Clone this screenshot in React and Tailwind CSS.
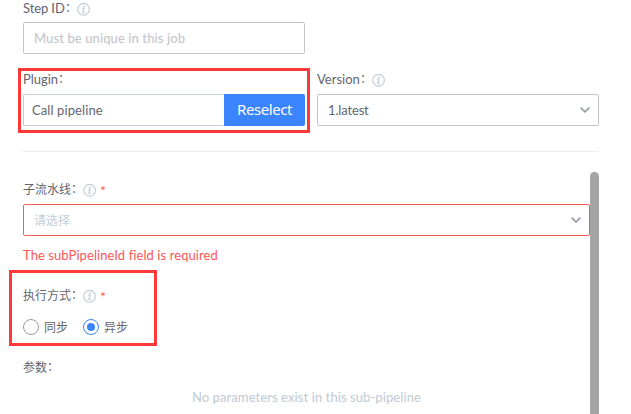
const latin = "font-['Lato','Noto_Sans_CJK_SC',sans-serif]";

function InfoIcon() {
  return (
    <svg className="relative top-px h-[13px] w-[13px] shrink-0" viewBox="0 0 13 13" fill="none" stroke="#c4cedb">
      <circle cx="6.6" cy="6.3" r="5.8" strokeWidth="1.2" />
      <path d="M5.2 5.2H7L6 9.4H7.8" strokeWidth="1.3" />
      <path d="M7.2 2.5L6.9 3.9" strokeWidth="1.6" />
    </svg>
  );
}

function Chevron() {
  return (
    <svg className="h-[6px] w-[10px] shrink-0" viewBox="0 0 10 6" fill="none" stroke="#979ba5" strokeWidth="1.6">
      <path d="M0.6 0.6L5 4.9L9.4 0.6" />
    </svg>
  );
}

function Label({ text, info, required, textClass = "relative top-px text-[12px]" }) {
  return (
    <div className="flex h-4 items-center leading-4 text-[#63656e]">
      <span className={`whitespace-nowrap ${textClass}`}>{text}</span>
      <span className="w-3 text-[12px]">：</span>
      {info && <InfoIcon />}
      {required && <span className="relative top-[2px] ml-1 text-[14px] leading-4 text-[#ff5656]">*</span>}
    </div>
  );
}

function Radio({ label, checked }) {
  return (
    <div className="flex w-[60px] items-center">
      <span
        className={`flex h-4 w-4 items-center justify-center rounded-full border ${checked ? "border-[#3a84ff]" : "border-[#979ba5]"}`}
      >
        {checked && <span className="h-2 w-2 rounded-full bg-[#3a84ff]" />}
      </span>
      <span className="relative top-px ml-[5px] text-[12px] leading-4">{label}</span>
    </div>
  );
}

export default function App() {
  return (
    <div className={`relative h-[414px] w-[631px] overflow-hidden bg-white pl-[23px] text-[#63656e] [font-variant-ligatures:none] ${latin}`}>
      <Label text="Step ID" info textClass="w-[42px] text-[13px] tracking-[-0.1px]" />
      <div className="mt-[6px] flex h-8 w-[282px] items-center rounded-[2px] border border-[#c4c6cc] pt-px pl-[10px] text-[13px] font-medium text-[#c4c6cc]">
        <span className="tracking-[0.1px]">Must be unique in this job</span>
      </div>

      <div className="mt-[17px] flex gap-3">
        <div className="w-[282px]">
          <Label text="Plugin" textClass="w-[35px] text-[13px] tracking-[-0.05px]" />
          <div className="mt-[7px] flex h-8">
            <div className="flex flex-1 items-center rounded-l-[2px] border border-r-0 border-[#c3cdd7] pt-[2px] pl-2 text-[13px] tracking-[0.1px]">
              <span>Call pipeline</span>
            </div>
            <div className="flex w-[81px] items-center justify-center rounded-r-[2px] bg-[#3a84ff] pb-px font-['Noto_Sans',sans-serif] text-[15px] tracking-[-0.45px] text-white">
              <span>Reselect</span>
            </div>
          </div>
        </div>
        <div className="w-[282px]">
          <Label text="Version" info textClass="w-[43px] text-[13px]" />
          <div className="mt-[7px] flex h-8 items-center justify-between rounded-[2px] border border-[#c4c6cc] pr-2 pl-[10px] text-[13px]">
            <span className="relative top-px tracking-[-0.15px]">1.latest</span>
            <Chevron />
          </div>
        </div>
      </div>

      <div className="mt-[25px] h-px w-[576px] bg-[#ebedf0]" />

      <div className="mt-5 flex h-[242px] w-[576px]">
        <div className="w-[567px] pt-[9px]">
          <Label text="子流水线" info required />
          <div className="mt-[7px] flex h-8 items-center justify-between rounded-[2px] border border-[#ff5656] pr-2 pl-[10px] text-[12px] text-[#c3cdd7]">
            <span className="relative top-px">请选择</span>
            <Chevron />
          </div>
          <div className="mt-[11px] h-4 text-[13px] leading-4 text-[#ff5656]">
            <span className="tracking-[0.08px]">The subPipelineId field is required</span>
          </div>
          <div className="mt-6">
            <Label text="执行方式" info required />
          </div>
          <div className="mt-4 flex">
            <Radio label="同步" />
            <Radio label="异步" checked />
          </div>
          <div className="mt-6">
            <Label text="参数" />
          </div>
          <div className="mt-[14px] text-center text-[13px] leading-4 font-medium text-[#c3cdd7]">
            <span className="tracking-[0.07px]">No parameters exist in this sub-pipeline</span>
          </div>
        </div>
        <div className="w-[9px] rounded-t-full bg-[#a5a5a5]" />
      </div>

      <div className="absolute top-[68px] left-[18px] h-[65px] w-[292px] border-3 border-[#fd3838]" />
      <div className="absolute top-[270px] left-[9px] h-[76px] w-[148px] border-3 border-[#fd3838]" />
    </div>
  );
}
